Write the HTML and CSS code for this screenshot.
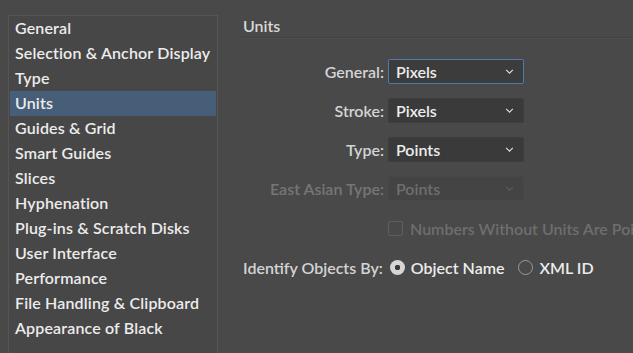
FILE: index.html
```html
<!DOCTYPE html>
<html>
<head>
    <title>Preferences - Units</title>
    <link rel="stylesheet" href="styles.css">
</head>
<body>
    <div class="window">
        <ul class="categories">
            <li>General</li>
            <li>Selection &amp; Anchor Display</li>
            <li>Type</li>
            <li class="selected">Units</li>
            <li>Guides &amp; Grid</li>
            <li>Smart Guides</li>
            <li>Slices</li>
            <li>Hyphenation</li>
            <li>Plug-ins &amp; Scratch Disks</li>
            <li>User Interface</li>
            <li>Performance</li>
            <li>File Handling &amp; Clipboard</li>
            <li>Appearance of Black</li>
        </ul>

        <div class="panel">
            <h2>Units</h2>

            <div class="fields">
                <label class="field-label">General:</label>
                <div class="select focused"><span>Pixels</span><svg class="chevron" viewBox="0 0 10 6"><path d="M1 1l4 4 4-4"/></svg></div>

                <label class="field-label">Stroke:</label>
                <div class="select"><span>Pixels</span><svg class="chevron" viewBox="0 0 10 6"><path d="M1 1l4 4 4-4"/></svg></div>

                <label class="field-label">Type:</label>
                <div class="select"><span>Points</span><svg class="chevron" viewBox="0 0 10 6"><path d="M1 1l4 4 4-4"/></svg></div>

                <label class="field-label disabled">East Asian Type:</label>
                <div class="select disabled"><span>Points</span><svg class="chevron" viewBox="0 0 10 6"><path d="M1 1l4 4 4-4"/></svg></div>

                <span></span>
                <div class="checkbox disabled"><span class="box"></span>Numbers Without Units Are Points</div>
            </div>

            <div class="identify">
                <span class="identify-label">Identify Objects By:</span>
                <span class="radio"><span class="dot checked"></span>Object Name</span>
                <span class="radio"><span class="dot"></span>XML ID</span>
            </div>
        </div>
    </div>
</body>
</html>
```

FILE: styles.css
```css
body {
    margin: 0;
    background: #494949;
    font-family: Lato, "Open Sans", sans-serif;
    font-weight: 600;
    font-size: 16px;
    line-height: 19px;
    color: #ececec;
    overflow: hidden;
}
.window {
    display: flex;
    height: 353px;
    width: 633px;
    overflow: hidden;
}
.categories {
    list-style: none;
    margin: 15px 0 0 8px;
    padding: 0 1px;
    width: 206px;
    flex: none;
    border: 1px solid #555555;
    border-bottom: none;
    background: #474747;
    letter-spacing: 0.15px;
}
.categories li {
    height: 25px;
    line-height: 24px;
    padding-left: 5px;
    white-space: nowrap;
}
.categories li.selected {
    background: #475e78;
}
.panel {
    flex: 1;
    padding-left: 25px;
    min-width: 0;
}
h2 {
    margin: 16px 0 0 0;
    font-size: 16px;
    font-weight: 600;
    color: #d8d8d8;
    padding-bottom: 2px;
    border-bottom: 1px solid #414141;
    box-shadow: 0 1px 0 #505050;
}
.fields {
    display: grid;
    grid-template-columns: 141px auto;
    column-gap: 4px;
    row-gap: 14px;
    margin-top: 21px;
    align-items: center;
}
.field-label {
    text-align: right;
    color: #d4d4d4;
    white-space: nowrap;
}
.field-label.disabled {
    color: #767676;
}
.select {
    width: 118px;
    height: 23px;
    border: 1px solid #3e3e3e;
    border-radius: 2px;
    background: #3a3a3a;
    display: flex;
    align-items: center;
    justify-content: space-between;
    padding: 0 9px 0 7px;
}
.select.focused {
    border-color: #4b7aae;
    background: #3c3c3c;
}
.select.disabled {
    background: #444444;
    border-color: #474747;
    color: #6f6f6f;
}
.chevron {
    width: 9px;
    height: 5px;
    fill: none;
    stroke: #e0e0e0;
    stroke-width: 1.3;
}
.select.disabled .chevron {
    stroke: #5c5c5c;
}
.checkbox {
    display: flex;
    align-items: center;
    white-space: nowrap;
    margin-top: 4px;
}
.checkbox.disabled {
    color: #6e6e6e;
}
.box {
    width: 13px;
    height: 13px;
    border: 1px solid #5e5e5e;
    border-radius: 2px;
    margin-right: 7px;
}
.identify {
    display: flex;
    align-items: center;
    margin-top: 20px;
    white-space: nowrap;
}
.identify-label {
    color: #d4d4d4;
    margin-right: 7px;
}
.radio {
    display: flex;
    align-items: center;
    margin-right: 14px;
}
.dot {
    width: 15px;
    height: 15px;
    border-radius: 50%;
    border: 1px solid #9a9a9a;
    margin-right: 6px;
    box-sizing: border-box;
}
.dot.checked {
    border: none;
    background: radial-gradient(circle, #3a3a3a 0 2.5px, #d6d6d6 3px);
}
```
